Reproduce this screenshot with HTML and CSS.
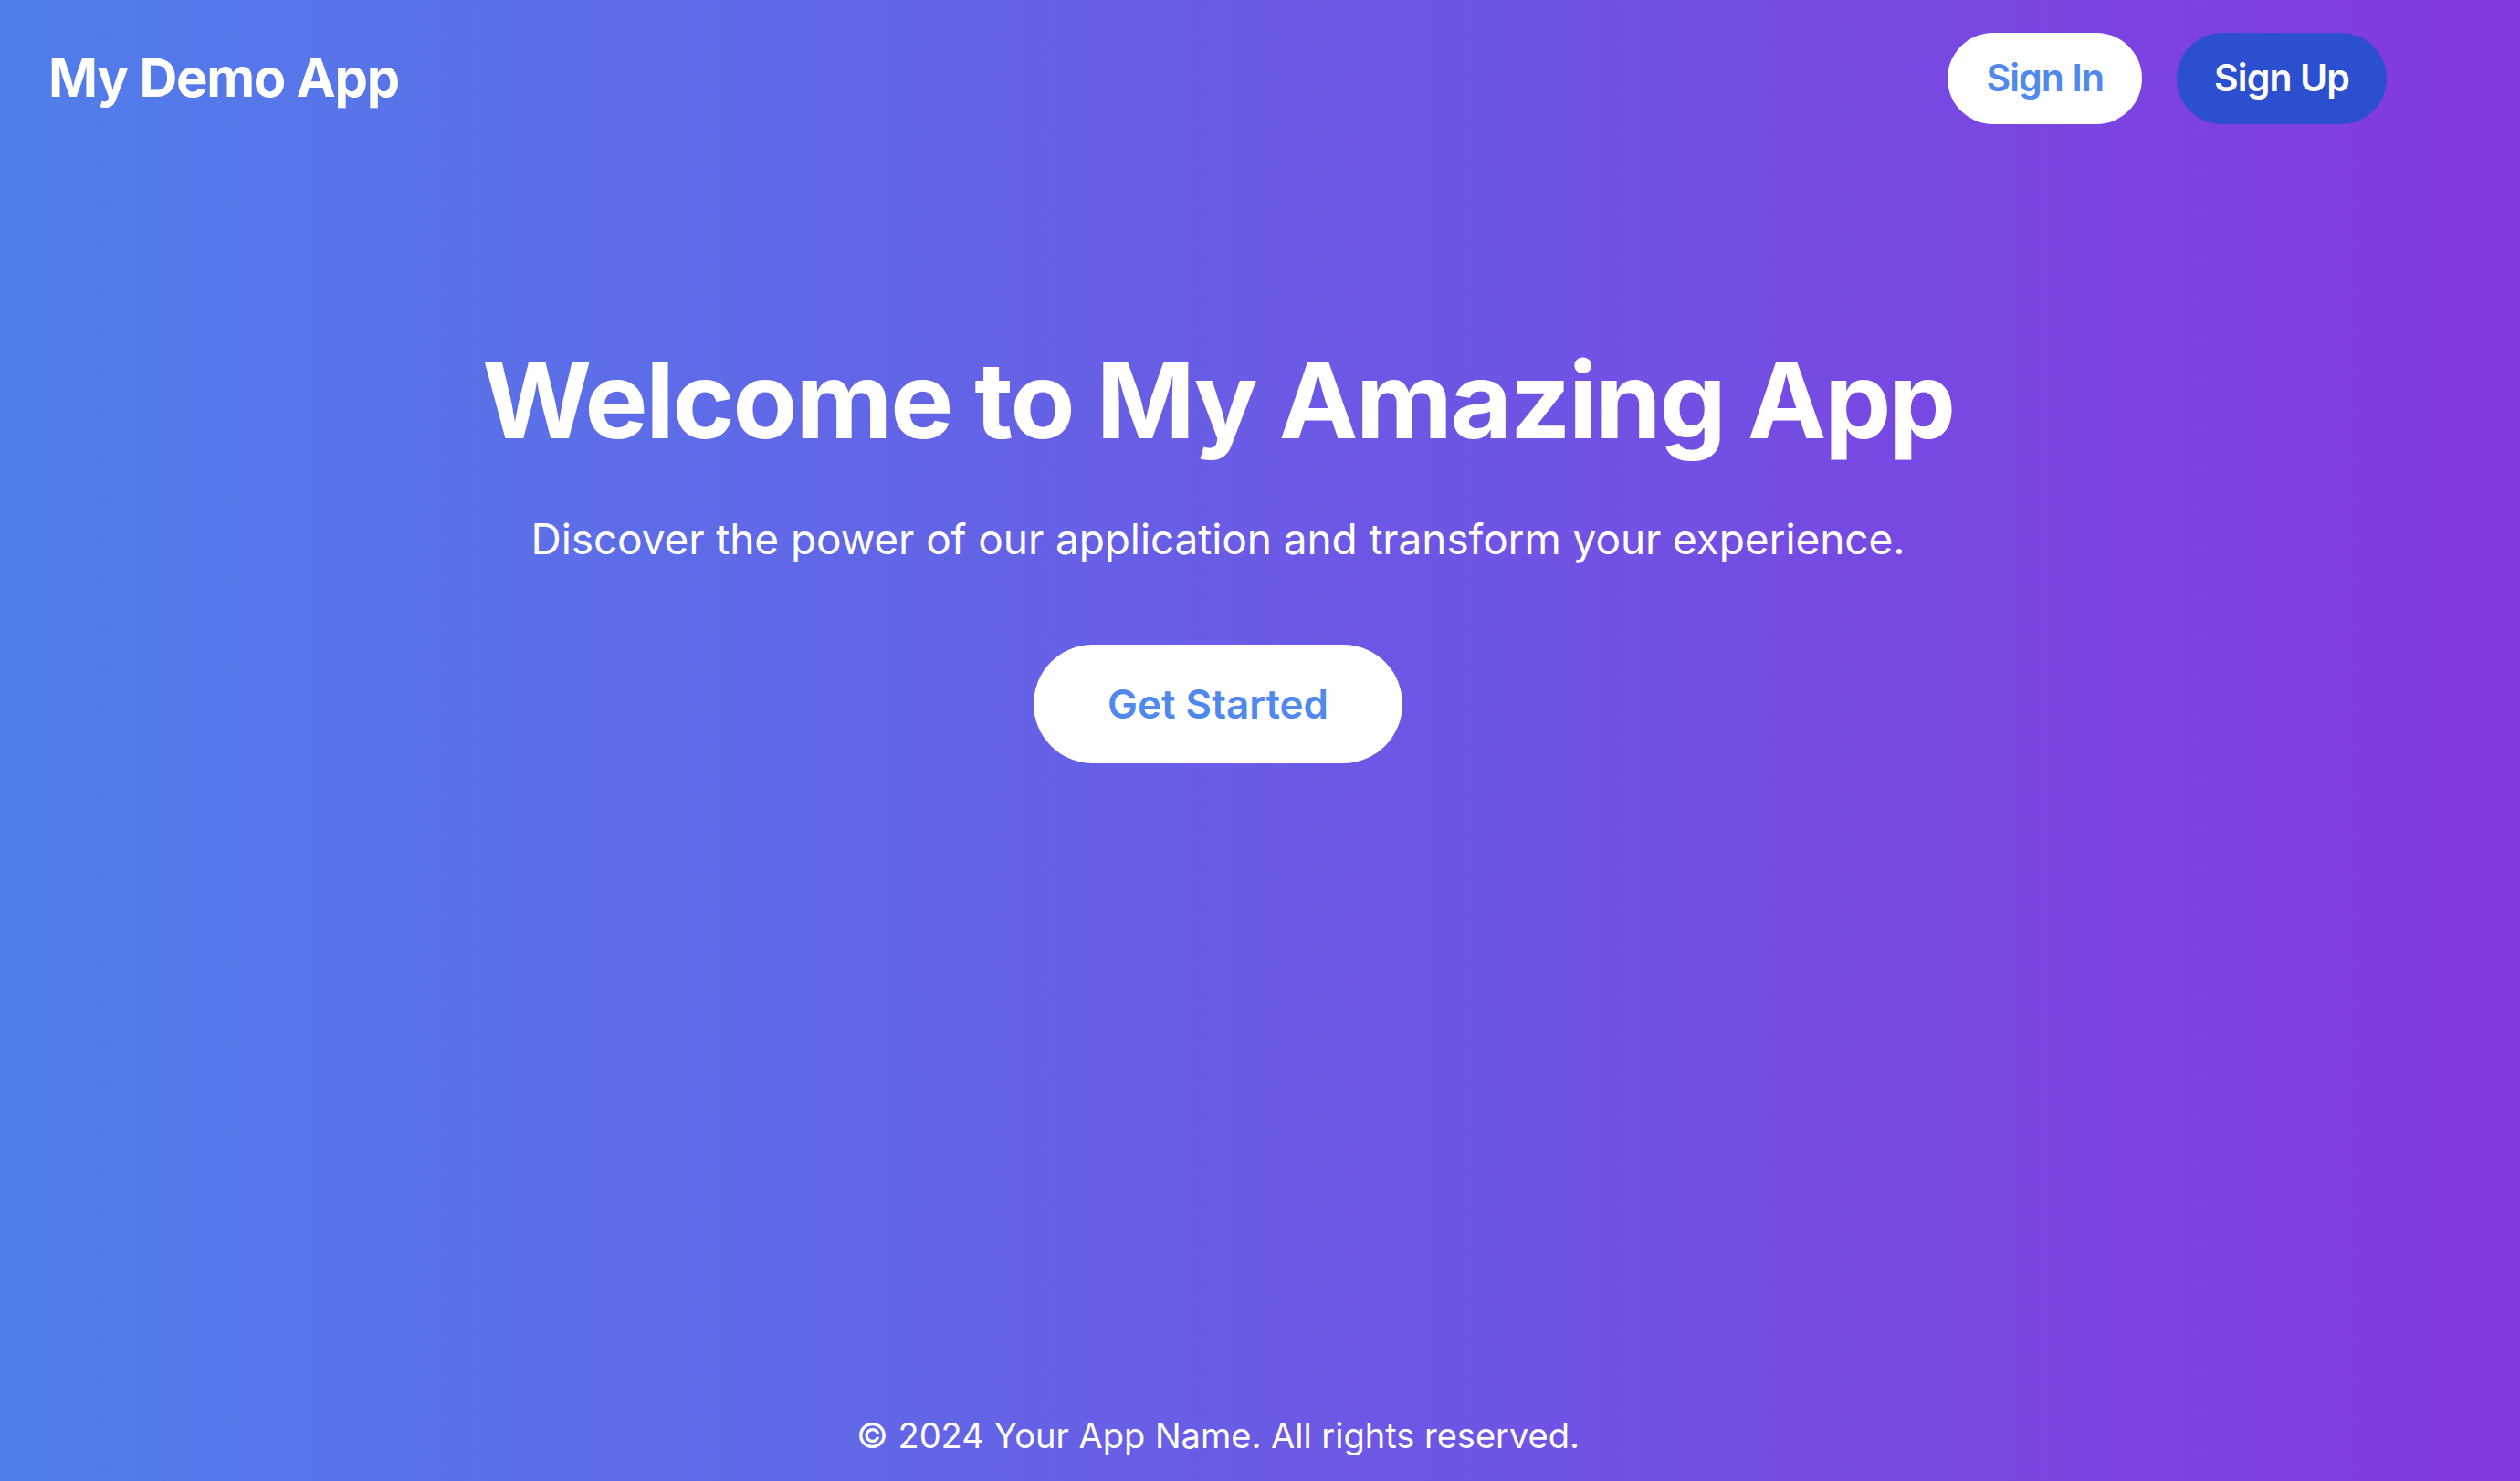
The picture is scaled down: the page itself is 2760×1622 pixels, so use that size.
FILE: index.html
```html
<!DOCTYPE html>
<html lang="en">
<head>
<meta charset="utf-8">
<title>My Demo App</title>
<link rel="stylesheet" href="styles.css">
</head>
<body>
<div class="page">
  <header class="header">
    <div class="logo">My Demo App</div>
    <nav class="nav">
      <a class="btn btn-signin" href="#">Sign In</a>
      <a class="btn btn-signup" href="#">Sign Up</a>
    </nav>
  </header>
  <main class="hero">
    <h1 class="hero-title">Welcome to My Amazing App</h1>
    <p class="hero-sub">Discover the power of our application and transform your experience.</p>
    <a class="btn-cta" href="#">Get Started</a>
  </main>
  <footer class="footer">© 2024 Your App Name. All rights reserved.</footer>
</div>
</body>
</html>
```
FILE: styles.css
```css
* { box-sizing: border-box; }
html, body {
  margin: 0;
  padding: 0;
  height: 100%;
}
body {
  font-family: Inter, "Noto Sans", "Liberation Sans", sans-serif;
  color: #ffffff;
  background: linear-gradient(to right, #507eea 0%, #8438e0 100%);
}
.page {
  min-height: 100vh;
  display: flex;
  flex-direction: column;
}
.header {
  display: flex;
  align-items: center;
  justify-content: space-between;
  padding: 36px 146px 0 53px;
}
.logo {
  font-size: 58px;
  font-weight: 700;
  line-height: 1.2;
  letter-spacing: -1.3px;
}
.nav {
  display: flex;
  gap: 38px;
}
.btn {
  display: inline-flex;
  align-items: center;
  height: 100px;
  padding: 0 41px;
  border-radius: 50px;
  font-size: 41px;
  font-weight: 600;
  line-height: 1.2;
  letter-spacing: -0.9px;
  text-decoration: none;
}
.btn-signin {
  background: #ffffff;
  color: #5088ee;
  padding: 0 42px;
}
.btn-signup {
  background: #2b4fcf;
  color: #ffffff;
}
.hero {
  flex: 1;
  display: flex;
  flex-direction: column;
  align-items: center;
  padding: 233px 92px 0 0;
  text-align: center;
}
.hero-title {
  margin: 0;
  font-size: 116px;
  font-weight: 700;
  line-height: 1.2;
  letter-spacing: -2.2px;
}
.hero-sub {
  margin: 53px 0 0;
  font-size: 46px;
  font-weight: 400;
  line-height: 1.3;
  letter-spacing: -0.1px;
}
.btn-cta {
  margin-top: 85px;
  display: inline-flex;
  align-items: center;
  height: 130px;
  padding: 0 81px;
  border-radius: 65px;
  background: #ffffff;
  color: #5088ee;
  font-size: 44px;
  font-weight: 600;
  line-height: 1.2;
  text-decoration: none;
}
.footer {
  padding: 0 92px 26px 0;
  text-align: center;
  font-size: 38px;
  line-height: 1.2;
}
```
